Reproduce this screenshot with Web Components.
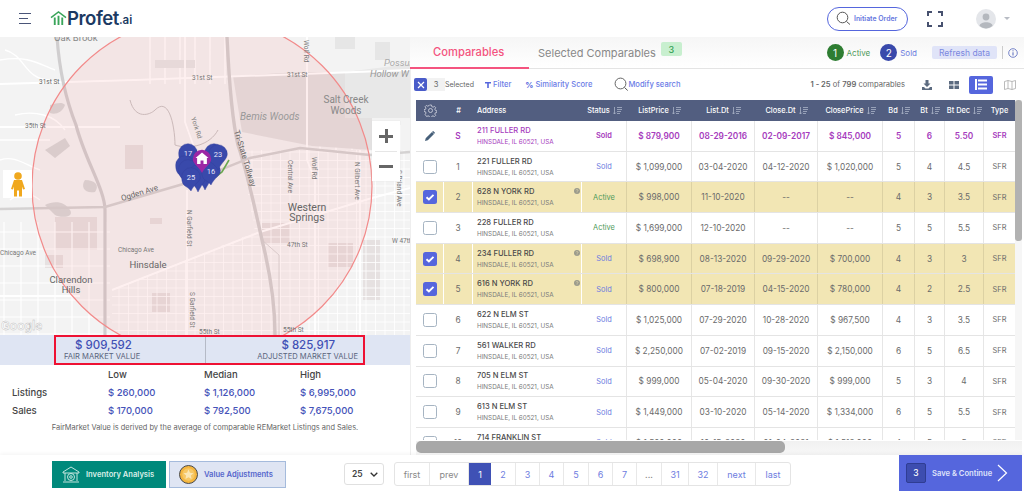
<!DOCTYPE html>
<html lang="en"><head><meta charset="utf-8"><title>Profet.ai</title>
<style>
html,body{margin:0;padding:0;background:#fff;overflow:hidden}
body{font-family:Inter,"Liberation Sans",sans-serif;width:1024px;height:491px}
</style></head><body>
<profet-app></profet-app>
<script>
const def=(name,css,html,init)=>{customElements.define(name,class extends HTMLElement{
  connectedCallback(){ if(this.shadowRoot) return; const s=this.attachShadow({mode:'open'});
    s.innerHTML='<style>'+css+'</style>'+(typeof html==='function'?html(this):html); if(init) init(s,this);}
});};

def('profet-header',`
:host{display:flex;align-items:center;height:37px;background:#fff;position:relative}
.burger{margin-left:19px;width:12px;display:flex;flex-direction:column;gap:3.5px}
.burger i{display:block;height:1.6px;background:#4a5578}.burger i:nth-child(2){width:9px}
.logo{display:flex;align-items:center;margin-left:19px;margin-top:-1px;width:86px}
.logo b{font:600 18.6px/20px Inter,sans-serif;color:#1c3a63;letter-spacing:-.45px}
.logo span{font:600 11.5px/20px Inter,sans-serif;color:#1c3a63;margin-top:3px}
.pill{margin-left:691px;display:flex;align-items:center;width:81px;height:24px;box-sizing:border-box;border:1.5px solid #5566dd;border-radius:13px;font:600 6.9px Inter,sans-serif;color:#6677e0;padding-left:8px;gap:3px;white-space:nowrap}
.fs{margin-left:19px;display:block}
.av{margin-left:33px;display:block}
.car{margin-left:8px;width:0;height:0;border:3px solid transparent;border-top:3px solid #b8bcc4;margin-top:3px}
`,`<div class="burger"><i></i><i></i><i></i></div>
<div class="logo"><svg width="17" height="15" viewBox="0 0 18 16"><path d="M1 7L9 1l8 6" fill="none" stroke="#3aa55a" stroke-width="1.6"/><path d="M5 15V7M9 15V5M13 15V7" stroke="#3aa55a" stroke-width="2"/></svg><b>Profet</b><span>.ai</span></div>
<div class="pill"><svg width="15" height="15" viewBox="0 0 15 15"><circle cx="6.5" cy="6.5" r="5.3" fill="none" stroke="#555" stroke-width="1"/><path d="M10.5 10.5l3.5 3" stroke="#555" stroke-width="1"/></svg>Initiate Order</div>
<svg class="fs" width="16" height="16" viewBox="0 0 16 16" fill="none" stroke="#47516f" stroke-width="2"><path d="M1 5V1h4M11 1h4v4M15 11v4h-4M5 15H1v-4"/></svg>
<svg class="av" width="20" height="20" viewBox="0 0 20 20"><circle cx="10" cy="10" r="10" fill="#e4e6ea"/><circle cx="10" cy="8" r="3.4" fill="#b4b8be"/><path d="M3.5 17c.5-5 13-5 13 0a10 10 0 0 1-13 0z" fill="#b4b8be"/></svg><i class="car"></i>`);

/* Map */
def('map-panel',`
:host{display:block;height:298px;position:relative;overflow:hidden;background:#f1f1f1}
svg.m{display:block;width:410px;height:298px}
text{font-family:Roboto,"Liberation Sans",sans-serif}
.zoom{position:absolute;left:372px;top:84px;width:28px;height:60px;background:#fff;display:flex;flex-direction:column;align-items:center;justify-content:space-around;box-shadow:0 0 1px #ddd}
.zoom i{display:block;width:14px;height:3px;background:#666;position:relative}
.zoom i.p:after{content:"";position:absolute;left:5.5px;top:-5.5px;width:3px;height:14px;background:#666}
.zoom hr{position:absolute;left:3px;right:3px;top:30px;margin:0;border:0;border-top:1px solid #e6e6e6}
.peg{position:absolute;left:3px;top:133px;width:29px;height:28px;background:#fff;display:flex;align-items:center;justify-content:center}
`,()=>{
 let grid='';
 for(let x=100;x<=410;x+=9.5) grid+=`M${x} 150V335`;
 for(let y=152;y<=335;y+=8.5) grid+=`M100 ${y}H410`;
 let gridW='';
 for(let x=4;x<=110;x+=17) gridW+=`M${x} 222V335`;
 for(let y=232;y<=335;y+=17) gridW+=`M0 ${y}H110`;
 let gridT='';
 for(let x=150;x<=225;x+=15) gridT+=`M${x} 37V84`;
 for(let x=320;x<=410;x+=16) gridT+=`M${x} 125V150`;
 const pin=(x,y,n,c='#3949ab',h=16)=>`<path d="M${x-9.3} ${y}a9.3 9.3 0 0 1 18.6 0c0 5-5.5 ${h-8}-9.3 ${h}c-3.8-${h-8}-9.3-${h-11}-9.3-${h}z" fill="${c}" stroke="#33409a" stroke-width=".4"/>`+(n?`<text x="${x}" y="${y+2.6}" text-anchor="middle" font-size="7.5" fill="#e6e8fa">${n}</text>`:'');
 return `<svg class="m" viewBox="0 37 410 298">
 <defs><clipPath id="g"><path d="M240 152L290 145 410 140V335H112V290L255 232z"/></clipPath></defs>
 <rect x="0" y="37" width="410" height="298" fill="#f3f3f3"/>
 <path d="${gridT}M0 60C30 55 40 65 55 70M5 50c20 5 20 30 45 30M15 115c20-5 40 0 50 15M0 140h50M0 160c15-5 25 5 40 10M10 200c10-8 20-8 30 0" stroke="#fff" stroke-width="1.4" fill="none"/>
 <path d="M233 76L300 72 345 72 372 90 372 150 312 146 242 132z" fill="#e3e1e1"/>
 <path d="M345 72L410 64V118L345 118z" fill="#e8e8e8"/>
 <path d="M155 60h40v8h-40zM335 37h20v12h-20zM375 42h15v18h-15z" fill="#e6e6e6"/>
 <path d="M125 145h18v24h-18zM55 217h42v33H55zM45 255h18v13H45zM262 223h28v20h-28zM328 243h25v24h-25zM152 293h18v19h-18zM363 240h17v60h-17zM150 218h12v6h-12z" fill="#e6e1e1"/>
 <path d="M45 150l20-12 5 8-15 12zM45 205c10-5 20-3 25 5s-10 8-15 5zM85 180c10 0 15 5 10 12-10 2-15-5-10-12zM50 105c8-2 12-3 15 0-3 8-10 10-15 8z" fill="#d8d8d8"/>
 <g clip-path="url(#g)"><path d="${grid}" stroke="#fff" stroke-width=".9" fill="none" opacity=".9"/></g>
 <path d="${gridW}" stroke="#fff" stroke-width="1.2" fill="none"/>
 <path d="M0 84L135 80 410 70M0 127H120M0 296h80M112 290L260 232 372 198 410 188" stroke="#fff" stroke-width="2" fill="none"/>
 <path d="M307 37V160L315 180V335M185 37V122L195 150M187 190V335M360 150V335" stroke="#fff" stroke-width="1.800" fill="none"/>
 <path d="M57 37C60 80 70 110 76 125 85 160 105 190 105 210V335" stroke="#d0cecf" stroke-width="3.200" fill="none"/>
 <path d="M227 37C229 80 232 120 238 145 248 175 253 200 262 240 272 280 275 310 275 335" stroke="#d2d0d0" stroke-width="3.400" fill="none"/>
 <path d="M0 209L105 207 190 182 250 158 300 148 370 155 410 152" stroke="#d4d2d2" stroke-width="2.400" fill="none"/>
 <path d="M130 100C135 120 150 115 155 110 170 95 175 130 175 145 190 150 210 145 218 130" stroke="#c8c4c4" stroke-width="1" fill="none"/>
 <path d="M262 240L279 255 279 335" stroke="#d0cece" stroke-width=".8" fill="none"/>
 <circle cx="202" cy="186" r="170" fill="#f05a5a" fill-opacity=".09" stroke="#f28a8a" stroke-width="1.2"/>
 <g fill="#777" font-size="6.5">
 <text x="54" y="41" font-size="9.5" fill="#888">Oak Brook</text>
 <text x="39" y="84" fill="#666">31st St</text><text x="192" y="79.5">31st St</text><text x="287" y="76.5" >31st St</text>
 <text x="25" y="128">35th St</text>
 <text transform="translate(191,118) rotate(72)">York Rd</text>
 <text transform="translate(304,40) rotate(90)">Wolf Rd</text>
 <text x="240" y="120" font-size="10" font-style="italic" fill="#999">Bemis Woods</text>
 <text x="384" y="66" font-size="9.5" font-style="italic" fill="#aaa">Possum</text>
 <text x="370" y="77" font-size="9.5" font-style="italic" fill="#999">Hollow W</text>
 <text x="346" y="103" text-anchor="middle" font-size="10" fill="#888">Salt Creek</text><text x="346" y="114" text-anchor="middle" font-size="10" fill="#888">Woods</text>
 <text transform="translate(234,131) rotate(73)" font-size="8" fill="#666">Tri-State Tollway</text>
 <text transform="translate(288,160) rotate(90)">Central Ave</text>
 <text transform="translate(312,157) rotate(90)">Wolf Rd</text>
 <text transform="translate(355,162) rotate(90)">N Gilbert Ave</text>
 <text transform="translate(397,170) rotate(90)">S Briand Ave</text>
 <text transform="translate(122,201) rotate(-17)" font-size="8" fill="#666">Ogden Ave</text>
 <text x="307" y="211" text-anchor="middle" font-size="10.5" fill="#666">Western</text><text x="307" y="221" text-anchor="middle" font-size="10.5" fill="#666">Springs</text>
 <text transform="translate(187,210) rotate(90)">N Garfield St</text>
 <text transform="translate(190,292) rotate(90)">S Garfield St</text>
 <text x="392" y="243">W 47th</text><text x="287" y="247">47th St</text>
 <text x="0" y="255">Chicago Ave</text><text x="118" y="252">Chicago Ave</text>
 <text x="148" y="268" text-anchor="middle" font-size="9.5" fill="#666">Hinsdale</text>
 <text x="71" y="283" text-anchor="middle" font-size="9.5" fill="#666">Clarendon</text><text x="71" y="293" text-anchor="middle" font-size="9.5" fill="#666">Hills</text>
 <text x="199" y="334">55th St</text><text x="283" y="332">55th St</text>
 <text x="1" y="330" font-size="13" font-weight="500" fill="#fff" stroke="#bbb" stroke-width=".4">Google</text>
 </g>
 <path d="M214 178L222 172 229 160" stroke="#6aa84f" stroke-width="1.6" fill="none"/>
 ${pin(214,153,'','#3949ab',18)}
 ${pin(188,153,'17','#3949ab',18)}
 ${pin(185,165,'','#3949ab',18)}
 ${pin(188,169,'','#3949ab',18)}
 ${pin(205,172,'','#3949ab',18)}
 ${pin(198,174,'','#3949ab',18)}
 ${pin(211,171,'16','#3949ab',14)}
 ${pin(218,154,'23','#3949ab',16)}
 ${pin(191,177,'25','#3949ab',14)}
 <path d="M192.8 159a9.2 9.2 0 0 1 18.4 0c0 5-5.5 7-9.2 14c-3.7-7-9.2-9-9.2-14z" fill="#9c27a5"/>
 <path d="M202 152.500l-6.500 5.500h1.600v6h3.400v-3.500h3v3.500h3.400v-6h1.600z" fill="#fff"/>
 </svg>
 <div class="zoom"><i class="p"></i><hr><i></i></div>
 <div class="peg"><svg width="14" height="25" viewBox="0 0 14 25"><circle cx="7" cy="4" r="3.800" fill="#f0a81e"/><path d="M3 8h8l3 9-2 .5-1-3v10H8v-6H6v6H3v-10l-1 3L0 17z" fill="#f0a81e"/></svg></div>`;
});

def('value-band',`
:host{display:block;height:31px;background:#dfe5f3;padding-left:54px;box-sizing:border-box}
.box{width:311px;height:30px;box-sizing:border-box;border:2px solid #ee1133;display:flex;background:#dfe5f3}
.c{box-sizing:border-box;padding:0 5px;display:flex;flex-direction:column;justify-content:center}
.l{width:149px;padding-left:8px}.l b{margin-left:11px}
.r{flex:1;border-left:1px solid #b5bac6;text-align:right}
b{font:500 11.5px/13px Inter,sans-serif;color:#3f50b5}
span{font:400 7.600px/9px Inter,sans-serif;color:#5a647c}
.r b{margin-right:23px}
`,`<div class="box"><div class="c l"><b>$ 909,592</b><span>FAIR MARKET VALUE</span></div><div class="c r"><b>$ 825,917</b><span>ADJUSTED MARKET VALUE</span></div></div>`);

def('stats-table',`
:host{display:block;height:89px;background:#fff;font:500 9.500px Inter,sans-serif;color:#444}
.g{display:grid;grid-template-columns:96px 96px 96px 1fr;grid-auto-rows:18px;align-items:center;padding-left:12px;height:54px;margin-top:-1px}
.v{color:#4452b8;font-weight:500}
p{margin:0;font:400 7.450px/12px Inter,sans-serif;color:#666;text-align:center;padding:3px 0 0 0;width:410px}
`,`<div class="g"><span></span><span>Low</span><span>Median</span><span>High</span>
<span>Listings</span><span class="v">$ 260,000</span><span class="v">$ 1,126,000</span><span class="v">$ 6,995,000</span>
<span>Sales</span><span class="v">$ 170,000</span><span class="v">$ 792,500</span><span class="v">$ 7,675,000</span></div>
<p>FairMarket Value is derived by the average of comparable REMarket Listings and Sales.</p>`);

def('comp-tabs',`
:host{display:flex;align-items:stretch;height:32px;box-sizing:border-box;border-bottom:1px solid #e4e4e4;background:linear-gradient(#f6f6f6,#fff);font:500 10.500px Inter,sans-serif}
.t{display:flex;align-items:center}
.a{width:119px;box-sizing:border-box;padding-left:23px;color:#f4547f;border-bottom:2px solid #f4547f;margin-bottom:-1px;font-size:11.200px}
.b{margin-left:9px;color:#888;font-size:11px;font-weight:400;white-space:nowrap}
.bad{margin:-7px 0 0 5px;width:21px;height:14px;background:#c8efcf;color:#2f9e53;border-radius:2px;display:flex;align-items:center;justify-content:center;font-size:9px}
.sp{flex:1}
.n{width:17px;height:17px;border-radius:50%;color:#fff;display:flex;align-items:center;justify-content:center;font-size:10px;margin-right:3px}
.lg{display:flex;align-items:center;font-size:8px;font-weight:400;margin-right:10px}
.rf{width:65px;height:13px;background:#e0e4f8;color:#7b88e0;border-radius:2px;font-size:8.500px;font-weight:400;display:flex;align-items:center;justify-content:center;margin:0 5px 0 6px}
.d{width:1px;height:13px;background:#ccc}
.r{display:flex;align-items:center;padding-right:6px}
svg{margin-left:5px}
`,`<div class="t a">Comparables</div><div class="t b">Selected Comparables</div><div class="t"><div class="bad">3</div></div><div class="sp"></div>
<div class="r"><div class="lg" style="color:#4f9a5a"><span class="n" style="background:#2e7d32">1</span>Active</div><div class="lg" style="color:#6d7ce0;margin-right:9px"><span class="n" style="background:#3949ab">2</span>Sold</div><div class="rf">Refresh data</div><div class="d"></div>
<svg width="10" height="10" viewBox="0 0 10 10"><circle cx="5" cy="5" r="4.300" fill="none" stroke="#5566bb" stroke-width=".8"/><path d="M5 4.300V7.500M5 2.300v1" stroke="#5566bb" stroke-width="1"/></svg></div>`);

def('comp-toolbar',`
:host{display:flex;align-items:center;height:31px;font:500 7.600px Inter,sans-serif;color:#6a7be6;white-space:nowrap}
.x{margin-left:4px;width:13px;height:13px;background:#4a5cc9;border-radius:2px;display:flex;align-items:center;justify-content:center}
.n{width:18px;height:13px;background:#f2f2f2;color:#666;font-weight:400;display:flex;align-items:center;justify-content:center}
.s{color:#666;font-weight:400;width:40px;font-size:7px}
.f{display:flex;align-items:center;gap:2px}
.c{color:#666;font-weight:400;margin-left:auto;font-size:7.600px}.c b{font-weight:600}
.on{width:24px;height:18px;background:#5566dd;border-radius:2px;display:flex;align-items:center;justify-content:center}
`,`<div class="x"><svg width="8" height="8" viewBox="0 0 8 8"><path d="M1 1l6 6M7 1L1 7" stroke="#fff" stroke-width="1.200"/></svg></div><div class="n">3</div><div class="s">Selected</div>
<div class="f"><svg width="6" height="6" viewBox="0 0 6 6"><path d="M0 0h6v1.500H3.800V6H2.200V1.500H0z" fill="#5566dd"/></svg>Filter</div>
<div class="f" style="margin-left:14px"><b style="font:700 8px Inter,sans-serif;color:#5566dd">%</b>Similarity Score</div>
<div class="f" style="margin-left:22px;gap:0"><svg width="14" height="15" viewBox="0 0 14 15"><circle cx="6.500" cy="6.500" r="5.400" fill="none" stroke="#555" stroke-width=".9"/><path d="M10.500 10.500l3.200 3" stroke="#555"/></svg>Modify search</div>
<div class="c"><b>1 - 25</b> of <b>799</b> comparables</div>
<svg style="margin-left:17px" width="10" height="10" viewBox="0 0 10 10"><path d="M3.500 0h3v3.500h2L5 7 1.500 3.500h2zM0 7h2l1.500 1.500h3L8 7h2v3H0z" fill="#5c6b80"/></svg>
<svg style="margin-left:17px" width="10" height="8" viewBox="0 0 10 8"><path d="M0 0h4.500v3.500H0zM5.500 0H10v3.500H5.500zM0 4.500h4.500V8H0zM5.500 4.500H10V8H5.500z" fill="#5c6b80"/></svg>
<div class="on" style="margin-left:10px"><svg width="12" height="11" viewBox="0 0 12 11"><path d="M0 0h2v11H0zM3 .5h9v2H3zM3 4.500h9v2H3zM3 8.500h9v2H3z" fill="#fff"/></svg></div>
<svg style="margin:0 8px 0 11px" width="12" height="10" viewBox="0 0 12 10" fill="none" stroke="#aaa" stroke-width=".8"><path d="M.5 1.500L4 .5l4 1 3.500-1v8L8 9.500l-4-1-3.500 1zM4 .5v8M8 1.500v8"/></svg>`);

const COLS='28px 29px 109px 45px 65px 63px 63px 65px 32px 30px 39px 31px';
const sortI=`<svg width="9" height="8" viewBox="0 0 9 8" style="margin-left:3px;flex:none" fill="none" stroke="#aab2c6" stroke-width=".8"><path d="M1.500 0v7M0 5.500L1.500 7 3 5.500M4 .5h5M4 2.500h5M4 4.500h4M4 6.500h3"/></svg>`;
def('comp-head',`
:host{display:grid;grid-template-columns:${COLS};height:21px;background:#525e80;color:#fff;font:500 7.400px Inter,sans-serif;align-items:center;text-align:center;white-space:nowrap}
div{display:flex;align-items:center;justify-content:center;height:100%;min-width:0}
.l{justify-content:flex-start;padding-left:4px}
`,`<div><svg width="13" height="13" viewBox="0 0 13 13" fill="none" stroke="#c7cbd8" stroke-width=".9"><circle cx="6.500" cy="6.500" r="2"/><path d="M5.500 1h2l.3 1.600 1.300.6 1.400-.8 1.200 1.300-.9 1.400.5 1.200 1.500.4v1.800l-1.500.3-.5 1.300.9 1.300-1.300 1.300-1.400-.9-1.200.5-.3 1.500h-2l-.2-1.500-1.300-.5-1.300.9L1.100 10.400l.9-1.300-.5-1.300L0 7.500V5.700l1.500-.4.500-1.200-.9-1.400 1.300-1.300 1.300.8 1.300-.6z"/></svg></div><div>#</div><div class="l">Address</div>
<div>Status${sortI}</div><div>ListPrice${sortI}</div><div>List.Dt${sortI}</div><div>Close.Dt${sortI}</div><div>ClosePrice${sortI}</div><div>Bd${sortI}</div><div>Bt${sortI}</div><div>Bt&nbsp;Dec${sortI}</div><div>Type</div>`);

customElements.define('comp-row',class extends HTMLElement{
 connectedCallback(){ if(this.shadowRoot) return;
  const d=JSON.parse(this.getAttribute('data'));
  const s=this.attachShadow({mode:'open'});
  const subj=d.s, sel=d.sel;
  const stc=d.status=='Active'?'#4f9a5a':'#6d7ce0';
  const chk=subj?`<svg width="10" height="10" viewBox="0 0 10 10"><path d="M0 10l.7-2.800L7 1l2 2-6.200 6.300zM7.700.3l.5-.3 1.800 1.800-.3.5-.5.5-2-2z" fill="#47607a"/></svg>`
    : sel?`<svg width="14" height="14" viewBox="0 0 14 14"><rect width="14" height="14" rx="2.500" fill="#5566dd"/><path d="M3.500 7.200l2.400 2.300 4.600-4.700" stroke="#fff" stroke-width="1.900" fill="none"/></svg>`
    :`<svg width="14" height="14" viewBox="0 0 14 14"><rect x=".5" y=".5" width="13" height="13" rx="2" fill="#fff" stroke="#a6b4c2"/></svg>`;
  const q=d.q?`<svg class="q" width="6" height="6" viewBox="0 0 6 6"><circle cx="3" cy="3" r="3" fill="#9a9a8c"/><path d="M2 2.200c.3-.9 2-.8 2 .2 0 .7-1 .7-1 1.400M3 4.500v.6" stroke="#f2e6b4" stroke-width=".6" fill="none"/></svg>`:'';
  s.innerHTML=`<style>
  :host{display:grid;grid-template-columns:${COLS};height:30.700px;box-sizing:border-box;font:400 8.300px Inter,sans-serif;color:${subj?'#a63bbd':'#6b6b6b'};white-space:nowrap;${sel?'background:#f2e6b4;':'background:#fff;'}border-bottom:1px solid #e4e4e4;${subj?'font-weight:600;':''}}
  div{display:flex;align-items:center;justify-content:center;border-right:1px solid ${sel?'rgba(0,0,0,.09)':'#e6e6e6'};min-width:0;position:relative;overflow:hidden}
  .w{border-right:1.500px solid #fff}
  .ad{flex-direction:column;align-items:flex-start;padding-left:4px;justify-content:center;gap:2px}
  .ad b{font:500 7.600px/10px Inter,sans-serif;color:${subj?'#a63bbd':'#4a4a4a'}}
  .ad span{font:400 6.300px/8px Inter,sans-serif;color:${subj?'#a63bbd':'#7a7a7a'}}
  .st{color:${subj?'#a63bbd':stc};font-size:7.400px}.ty{font-size:7.400px}
  .q{position:absolute;right:1.500px;top:6px}
  </style>
  <div class="w" style="background:${sel?'#f2e6b4':'#fff'}">${chk}</div><div class="w">${d.n}</div><div class="ad w"><b>${d.a}</b><span>HINSDALE, IL 60521, USA</span>${q}</div>
  <div class="st">${d.status}</div><div>${d.lp}</div><div>${d.ld}</div><div>${d.cd}</div><div>${d.cp}</div><div>${d.bd}</div><div>${d.bt}</div><div>${d.bdec}</div><div class="ty" style="border-right:0">SFR</div>`;
 }
});

const ROWS=[
{s:1,n:'S',a:'211 FULLER RD',status:'Sold',lp:'$ 879,900',ld:'08-29-2016',cd:'02-09-2017',cp:'$ 845,000',bd:5,bt:6,bdec:'5.50'},
{n:1,a:'221 FULLER RD',status:'Sold',lp:'$ 1,099,000',ld:'03-04-2020',cd:'04-12-2020',cp:'$ 1,020,000',bd:5,bt:4,bdec:'4.5'},
{n:2,sel:1,q:1,a:'628 N YORK RD',status:'Active',lp:'$ 998,000',ld:'11-10-2020',cd:'--',cp:'--',bd:4,bt:3,bdec:'3.5'},
{n:3,a:'228 FULLER RD',status:'Active',lp:'$ 1,699,000',ld:'12-10-2020',cd:'--',cp:'--',bd:5,bt:5,bdec:'5.5'},
{n:4,sel:1,q:1,a:'234 FULLER RD',status:'Sold',lp:'$ 698,900',ld:'08-13-2020',cd:'09-29-2020',cp:'$ 700,000',bd:4,bt:3,bdec:'3'},
{n:5,sel:1,q:1,a:'616 N YORK RD',status:'Sold',lp:'$ 800,000',ld:'07-18-2019',cd:'04-15-2020',cp:'$ 780,000',bd:4,bt:2,bdec:'2.5'},
{n:6,a:'622 N ELM ST',status:'Sold',lp:'$ 1,025,000',ld:'07-29-2020',cd:'10-28-2020',cp:'$ 967,500',bd:4,bt:3,bdec:'3.5'},
{n:7,a:'561 WALKER RD',status:'Sold',lp:'$ 2,250,000',ld:'07-02-2019',cd:'09-15-2020',cp:'$ 2,150,000',bd:6,bt:5,bdec:'6.5'},
{n:8,a:'705 N ELM ST',status:'Sold',lp:'$ 999,000',ld:'05-04-2020',cd:'09-30-2020',cp:'$ 999,000',bd:5,bt:3,bdec:'4'},
{n:9,a:'613 N ELM ST',status:'Sold',lp:'$ 1,449,000',ld:'03-10-2020',cd:'05-14-2020',cp:'$ 1,334,000',bd:6,bt:5,bdec:'5.5'},
{n:10,a:'714 FRANKLIN ST',status:'Sold',lp:'$ 1,599,000',ld:'10-15-2020',cd:'01-04-2021',cp:'$ 1,512,000',bd:4,bt:5,bdec:'5'}];

def('comp-table',`
:host{display:grid;grid-template-columns:605px 7px;grid-template-rows:340px 15px;height:355px}
.tb{margin-left:6px;width:599px;overflow:hidden;height:340px}
.vb{background:#f6f6f6}
.vb i{display:block;width:7px;height:141px;background:#b2b2b2;border-radius:3px}
.hb{grid-column:1/3;background:linear-gradient(#f1f1f1,#f7f7f7);margin-left:6px;height:14px;margin-top:1px}
.hb i{display:block;width:369px;height:12px;background:#a8a8a8;border-radius:5px}
`,`<div class="tb"><comp-head></comp-head></div><div class="vb"><i></i></div><div class="hb"><i></i></div>`,
(s)=>{const tb=s.querySelector('.tb');ROWS.forEach(r=>{const e=document.createElement('comp-row');e.setAttribute('data',JSON.stringify(r));tb.appendChild(e);});});

def('pager-bar',`
:host{display:flex;height:24px;box-sizing:border-box;border:1px solid #e4e4e4;border-radius:3px;font:400 9px Inter,sans-serif;color:#6d7ce0;margin-left:10px}
span{display:flex;align-items:center;justify-content:center;border-right:1px solid #e8e8e8;box-sizing:border-box}
span:last-child{border:0}
.o{color:#888}.on{background:#3f51b5;color:#fff;border:0}
`,()=>{const it=[['first',35,'o'],['prev',39,'o'],['1',22,'on'],['2',25],['3',24],['4',24],['5',25],['6',24],['7',24],['...',25,'o'],['31',27],['32',29],['next',38],['last',34]];
 return it.map(i=>`<span class="${i[2]||''}" style="width:${i[1]}px">${i[0]}</span>`).join('');});

def('profet-footer',`
:host{display:flex;align-items:flex-end;height:36px;background:#fff;position:relative;box-shadow:0 -1px 4px rgba(0,0,0,.05)}
.btn{height:27px;box-sizing:border-box;display:flex;align-items:center;font:600 7.600px Inter,sans-serif;margin-bottom:3px;white-space:nowrap}
.inv{margin-left:52px;width:114px;background:#00897b;color:#d8efe9;padding-left:10px;gap:6px}
.val{margin-left:3px;width:117px;background:#dfe5f3;border:1px solid #a5bbdc;color:#5566cc;padding-left:9px;gap:6px}
.sel{margin:0 0 6px 58px;width:40px;height:22px;box-sizing:border-box;border:1px solid #e0e0e0;border-radius:3px;display:flex;align-items:center;justify-content:space-between;padding:0 5px 0 7px;font:600 8.500px Inter,sans-serif;color:#444}
.sv{margin-left:108px;width:123px;height:36px;background:#5566dd;color:#dfe3fa;display:flex;align-items:center;font:600 7.600px Inter,sans-serif;box-sizing:border-box;padding-left:7px;white-space:nowrap}
.sv b{width:20px;height:20px;box-sizing:border-box;background:#3d4db0;border:1px solid #2f3d93;border-radius:2px;display:flex;align-items:center;justify-content:center;font:500 8.500px Inter,sans-serif;margin-right:6px;color:#fff}
pager-bar{margin-bottom:5px}
`,`<div class="btn inv"><svg width="18" height="18" viewBox="0 0 18 18" fill="none" stroke="#d8efe9" stroke-width=".9"><path d="M1 6L9 1l8 5v1H1zM3 7v8M15 7v8M1 16h16"/><circle cx="9" cy="11" r="3.500"/><circle cx="9" cy="11" r="1.300"/></svg>Inventory Analysis</div>
<div class="btn val"><svg width="19" height="19" viewBox="0 0 19 19"><circle cx="9.500" cy="9.500" r="9" fill="#f4b63f" stroke="#4a4a4a" stroke-width="1"/><circle cx="9.500" cy="9.500" r="6.200" fill="#f7c866"/><path d="M9.500 4.500l1.500 3.300 3.500.4-2.600 2.300.7 3.500-3.100-1.800-3.100 1.800.7-3.500-2.600-2.300 3.500-.4z" fill="#fbe7b4"/></svg>Value Adjustments</div>
<div class="sel">25<svg width="8" height="5" viewBox="0 0 8 5"><path d="M.7.7L4 4 7.300.7" stroke="#333" stroke-width="1.300" fill="none"/></svg></div>
<pager-bar></pager-bar>
<div class="sv"><b>3</b>Save &amp; Continue<svg style="margin-left:5px" width="11" height="18" viewBox="0 0 11 18"><path d="M1 1l8.500 8L1 17" stroke="#fff" stroke-width="1.200" fill="none"/></svg></div>`);

def('profet-app',`
:host{display:block;width:1024px;height:491px;overflow:hidden}
.main{display:flex;height:418px}
.left{width:410px;flex:none}
.right{width:614px;flex:none;box-shadow:inset 1px 0 0 #eee}
`,`<profet-header></profet-header><div class="main"><div class="left"><map-panel></map-panel><value-band></value-band><stats-table></stats-table></div>
<div class="right"><comp-tabs></comp-tabs><comp-toolbar></comp-toolbar><comp-table></comp-table></div></div><profet-footer></profet-footer>`);
</script>
</body></html>
